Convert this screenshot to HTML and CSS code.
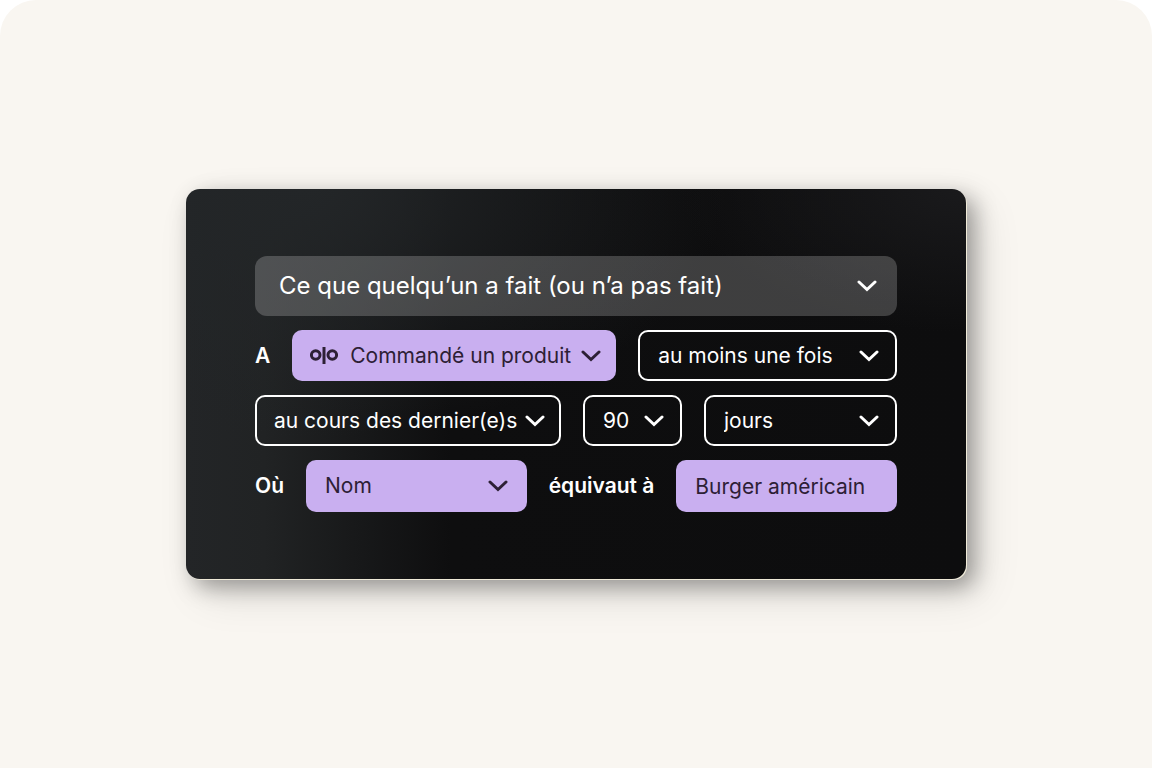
FILE: index.html
```
<!DOCTYPE html>
<html lang="fr">
<head>
<meta charset="utf-8">
<meta name="viewport" content="width=device-width, initial-scale=1">
<title>Segment</title>
<link rel="stylesheet" href="styles.css">
</head>
<body>
<main class="stage">
  <form class="card">
    <div class="field field-head">
      <select class="control" aria-label="Condition"><option>Ce que quelqu’un a fait (ou n’a pas fait)</option></select>
      <svg class="chevron" viewBox="0 0 20 12" aria-hidden="true"><path d="M2 2l8 7.500 8-7.500"/></svg>
    </div>

    <div class="row">
      <label class="word" for="event">A</label>
      <div class="field field-lilac field-event">
        <svg class="brand" viewBox="0 0 28 18" aria-hidden="true"><circle cx="5.700" cy="8" r="4.300"/><path d="M14 0v17"/><circle cx="22.300" cy="8" r="4.300"/></svg>
        <select class="control" id="event"><option>Commandé un produit</option></select>
        <svg class="chevron" viewBox="0 0 20 12" aria-hidden="true"><path d="M2 2l8 7.500 8-7.500"/></svg>
      </div>
      <div class="field field-outline field-count">
        <select class="control" aria-label="Fréquence"><option>au moins une fois</option></select>
        <svg class="chevron" viewBox="0 0 20 12" aria-hidden="true"><path d="M2 2l8 7.500 8-7.500"/></svg>
      </div>
    </div>

    <div class="row">
      <div class="field field-outline field-period">
        <select class="control" aria-label="Période"><option>au cours des dernier(e)s</option></select>
        <svg class="chevron" viewBox="0 0 20 12" aria-hidden="true"><path d="M2 2l8 7.500 8-7.500"/></svg>
      </div>
      <div class="field field-outline field-number">
        <select class="control" aria-label="Nombre"><option>90</option></select>
        <svg class="chevron" viewBox="0 0 20 12" aria-hidden="true"><path d="M2 2l8 7.500 8-7.500"/></svg>
      </div>
      <div class="field field-outline field-unit">
        <select class="control" aria-label="Unité"><option>jours</option></select>
        <svg class="chevron" viewBox="0 0 20 12" aria-hidden="true"><path d="M2 2l8 7.500 8-7.500"/></svg>
      </div>
    </div>

    <div class="row">
      <label class="word" for="property">Où</label>
      <div class="field field-lilac field-match">
        <select class="control" id="property"><option>Nom</option></select>
        <svg class="chevron" viewBox="0 0 20 12" aria-hidden="true"><path d="M2 2l8 7.500 8-7.500"/></svg>
      </div>
      <label class="word" for="value">équivaut à</label>
      <div class="field field-lilac field-match">
        <input class="control" id="value" type="text" value="Burger américain">
      </div>
    </div>
  </form>
</main>
</body>
</html>
```
FILE: styles.css
```
* {
  box-sizing: border-box;
}

body {
  margin: 0;
  background: #ffffff;
  color: #ffffff;
  font-family: Inter, "Liberation Sans", sans-serif;
  font-size: 21px;
  line-height: 28px;
}

.stage {
  display: flex;
  align-items: center;
  justify-content: center;
  min-height: 100vh;
  padding: 32px;
  border-radius: 36px 36px 0 0;
  background: #f9f6f1;
}

.card {
  display: flex;
  flex-direction: column;
  gap: 14px;
  width: 100%;
  max-width: 780px;
  padding: 67px 69px;
  border-radius: 14px;
  background:
    radial-gradient(ellipse at 100% 0, #1a1a1c 0, #1a1a1c00 26%),
    radial-gradient(ellipse at 15% 0, #232628 0, #23262800 45%),
    linear-gradient(90deg, #232527 0, #212324 10%, #0e0e0f 34%, #0d0d0e 100%);
  box-shadow:
    1px 1px 0 0 #efead8,
    8px 8px 22px #00000058,
    14px 16px 44px #0000001c;
}

.row {
  display: flex;
  align-items: center;
  gap: 22px;
}

.word {
  font-weight: 600;
  white-space: nowrap;
}

.field {
  display: flex;
  flex: 1 1 219px;
  align-items: center;
  gap: 8px;
  min-width: 0;
  min-height: 51px;
  padding: 0 18px;
  border-radius: 10px;
}

.field-head {
  flex: none;
  min-height: 60px;
  padding: 0 20px 0 24px;
  border-radius: 12px;
  background: #ffffff34;
  font-size: 24px;
}

.field-lilac {
  background: #c9aff0;
  color: #2d2035;
}

.field-outline {
  padding: 0 16px 0 18px;
  border: 2px solid #ffffff;
}

.field-event {
  flex-basis: 324px;
  padding: 0 15px 0 18px;
}

.field-count {
  flex-basis: 259px;
}

.field-period {
  flex-basis: 306px;
  gap: 4px;
  padding: 0 14px 0 17px;
}

.field-number {
  flex-basis: 99px;
}

.field-unit {
  flex-basis: 193px;
}

.field-match {
  min-height: 52px;
  padding: 0 19px;
}

.control {
  flex: 1;
  min-width: 0;
  height: 40px;
  margin: 0;
  padding: 0;
  border: 0;
  outline: 0;
  appearance: none;
  background: transparent;
  color: inherit;
  font: inherit;
}

.chevron {
  flex: none;
  width: 20px;
  height: 12px;
  fill: none;
  stroke: currentColor;
  stroke-width: 3;
  stroke-linecap: round;
  stroke-linejoin: miter;
}

.brand {
  flex: none;
  width: 28px;
  height: 18px;
  margin-right: 4px;
  fill: none;
  stroke: currentColor;
  stroke-width: 3;
}
```
